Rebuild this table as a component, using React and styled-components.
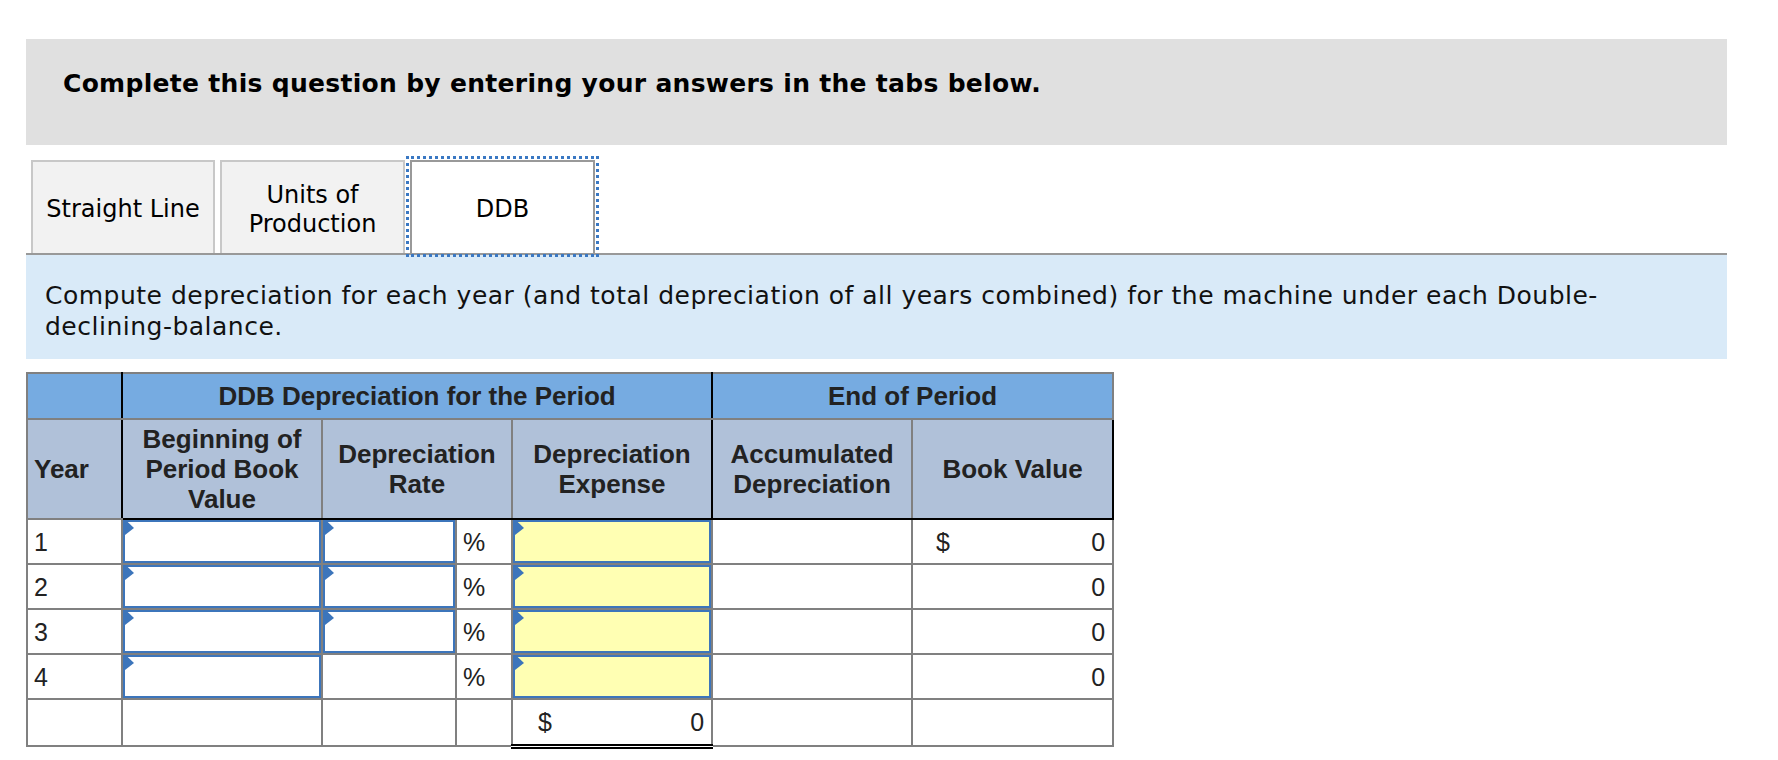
import React from "react";
import styled, { createGlobalStyle, css } from "styled-components";

const GlobalStyle = createGlobalStyle`
  html, body { margin: 0; padding: 0; background: #ffffff; }
  body { font-family: "DejaVu Sans", Verdana, sans-serif; color: #000; }
`;

const Page = styled.div`
  width: 1701px;
  padding: 39px 0 40px 26px;
`;

const Banner = styled.div`
  box-sizing: border-box;
  height: 106px;
  background: #e0e0e0;
  padding: 30px 0 0 37px;
  font-family: "DejaVu Sans", Verdana, sans-serif;
  font-weight: bold;
  font-size: 25px;
  letter-spacing: 0.3px;
  line-height: 29px;
  color: #000;
`;

const TabBar = styled.div`
  display: flex;
  align-items: flex-end;
  gap: 5px;
  margin-top: 15px;
  padding-left: 5px;
  border-bottom: 2px solid #999999;
`;

const Tab = styled.div`
  box-sizing: border-box;
  width: ${(p) => p.$w}px;
  height: 93px;
  padding-top: 4px;
  display: flex;
  align-items: center;
  justify-content: center;
  text-align: center;
  font-family: "DejaVu Sans", Verdana, sans-serif;
  font-size: 24px;
  line-height: 29px;
  color: #000;
  background: #f2f2f2;
  border: 2px solid #c8c8c8;
  border-bottom: none;
  ${(p) =>
    p.$active &&
    css`
      background: #ffffff;
      border-color: #999999;
      outline: 3px dotted #3a78c3;
      outline-offset: 1px;
    `}
`;

const Instruction = styled.div`
  box-sizing: border-box;
  height: 104px;
  background: #d9eaf8;
  padding: 25px 19px 0 19px;
  font-family: "DejaVu Sans", Verdana, sans-serif;
  font-size: 25px;
  letter-spacing: 0.5px;
  line-height: 31px;
  color: #111;
`;

const Table = styled.table`
  margin-top: 13px;
  border-collapse: collapse;
  table-layout: fixed;
  width: 1086px;
  font-family: "Liberation Sans", Arial, sans-serif;
  font-size: 25px;
  color: #222;
`;

const Col = styled.col`
  width: ${(p) => p.$w}px;
`;

const GROUP = "#000000";
const GRID = "#808080";

const HeadCell = styled.th`
  padding: 0 4px;
  font-size: 26px;
  font-weight: bold;
  text-align: ${(p) => (p.$left ? "left" : "center")};
  ${(p) => p.$left && css`padding-left: 6px;`}
  vertical-align: middle;
  line-height: 30px;
  color: #222;
  border: 2px solid ${GRID};
  background: ${(p) => (p.$top ? "#76abe1" : "#b0c1d9")};
  ${(p) => p.$groupLeft && css`border-left-color: ${GROUP};`}
  ${(p) => p.$groupRight && css`border-right-color: ${GROUP};`}
  ${(p) => p.$groupBottom && css`border-bottom-color: ${GROUP};`}
`;

const HeadRow = styled.tr`
  height: ${(p) => p.$h}px;
`;

const Row = styled.tr`
  height: ${(p) => p.$h || 45}px;
`;

const Cell = styled.td`
  border: 2px solid ${GRID};
  padding: ${(p) => (p.$entry ? "0" : "0 6px")};
  vertical-align: middle;
  line-height: 28px;
  ${(p) =>
    p.$total &&
    css`
      border-top-color: ${GROUP};
      border-bottom: 5px double ${GROUP};
    `}
`;

const YearNum = styled.span`
  display: block;
`;

const Money = styled.div`
  display: flex;
  justify-content: space-between;
  padding: 0 1px 0 ${(p) => p.$indent}px;
`;

const RightNum = styled.div`
  text-align: right;
  padding-right: 1px;
`;

const Entry = styled.label`
  position: relative;
  display: block;
  box-sizing: border-box;
  height: 43px;
  border: 2px solid #3c75bb;
  background: ${(p) => (p.$yellow ? "#ffffb3" : "#ffffff")};
  &::before {
    content: "";
    position: absolute;
    left: 0;
    top: 0;
    width: 9px;
    height: 13px;
    background: #3c75bb;
    clip-path: polygon(0 0, 30% 0, 100% 46%, 0 100%);
  }
`;

const EntryInput = styled.input`
  box-sizing: border-box;
  display: block;
  width: 100%;
  height: 100%;
  margin: 0;
  border: 0;
  padding: 0 8px;
  background: transparent;
  font-family: "Liberation Sans", Arial, sans-serif;
  font-size: 25px;
  color: #222;
  outline: none;
`;

function Field({ yellow }) {
  return (
    <Entry $yellow={yellow}>
      <EntryInput type="text" />
    </Entry>
  );
}

const rows = [
  { year: 1, rate: true, dollar: true },
  { year: 2, rate: true },
  { year: 3, rate: true },
  { year: 4, rate: false },
];

export default function App() {
  return (
    <>
      <GlobalStyle />
      <Page>
        <Banner>Complete this question by entering your answers in the tabs below.</Banner>
        <TabBar>
          <Tab $w={184}>Straight Line</Tab>
          <Tab $w={185}>
            Units of
            <br />
            Production
          </Tab>
          <Tab $w={185} $active>
            DDB
          </Tab>
        </TabBar>
        <Instruction>
          Compute depreciation for each year (and total depreciation of all years combined) for the machine under each Double-
          <br />
          declining-balance.
        </Instruction>
        <Table>
          <colgroup>
            <Col $w={95} />
            <Col $w={200} />
            <Col $w={134} />
            <Col $w={56} />
            <Col $w={200} />
            <Col $w={200} />
            <Col $w={201} />
          </colgroup>
          <thead>
            <HeadRow $h={46}>
              <HeadCell $top $groupRight />
              <HeadCell $top colSpan={4} $groupLeft $groupRight>
                DDB Depreciation for the Period
              </HeadCell>
              <HeadCell $top colSpan={2} $groupLeft>
                End of Period
              </HeadCell>
            </HeadRow>
            <HeadRow $h={100}>
              <HeadCell $left $groupRight>
                Year
              </HeadCell>
              <HeadCell $groupLeft $groupBottom>
                Beginning of Period Book Value
              </HeadCell>
              <HeadCell colSpan={2} $groupBottom>
                Depreciation Rate
              </HeadCell>
              <HeadCell $groupBottom $groupRight>
                Depreciation Expense
              </HeadCell>
              <HeadCell $groupLeft $groupBottom>
                Accumulated Depreciation
              </HeadCell>
              <HeadCell $groupBottom $groupRight>
                Book Value
              </HeadCell>
            </HeadRow>
          </thead>
          <tbody>
            {rows.map((r) => (
              <Row key={r.year}>
                <Cell>
                  <YearNum>{r.year}</YearNum>
                </Cell>
                <Cell $entry>
                  <Field />
                </Cell>
                <Cell $entry={r.rate}>{r.rate ? <Field /> : null}</Cell>
                <Cell>%</Cell>
                <Cell $entry>
                  <Field yellow />
                </Cell>
                <Cell />
                <Cell>
                  {r.dollar ? (
                    <Money $indent={17}>
                      <span>$</span>
                      <span>0</span>
                    </Money>
                  ) : (
                    <RightNum>0</RightNum>
                  )}
                </Cell>
              </Row>
            ))}
            <Row $h={47}>
              <Cell />
              <Cell />
              <Cell />
              <Cell />
              <Cell $total>
                <Money $indent={19}>
                  <span>$</span>
                  <span>0</span>
                </Money>
              </Cell>
              <Cell />
              <Cell />
            </Row>
          </tbody>
        </Table>
      </Page>
    </>
  );
}
